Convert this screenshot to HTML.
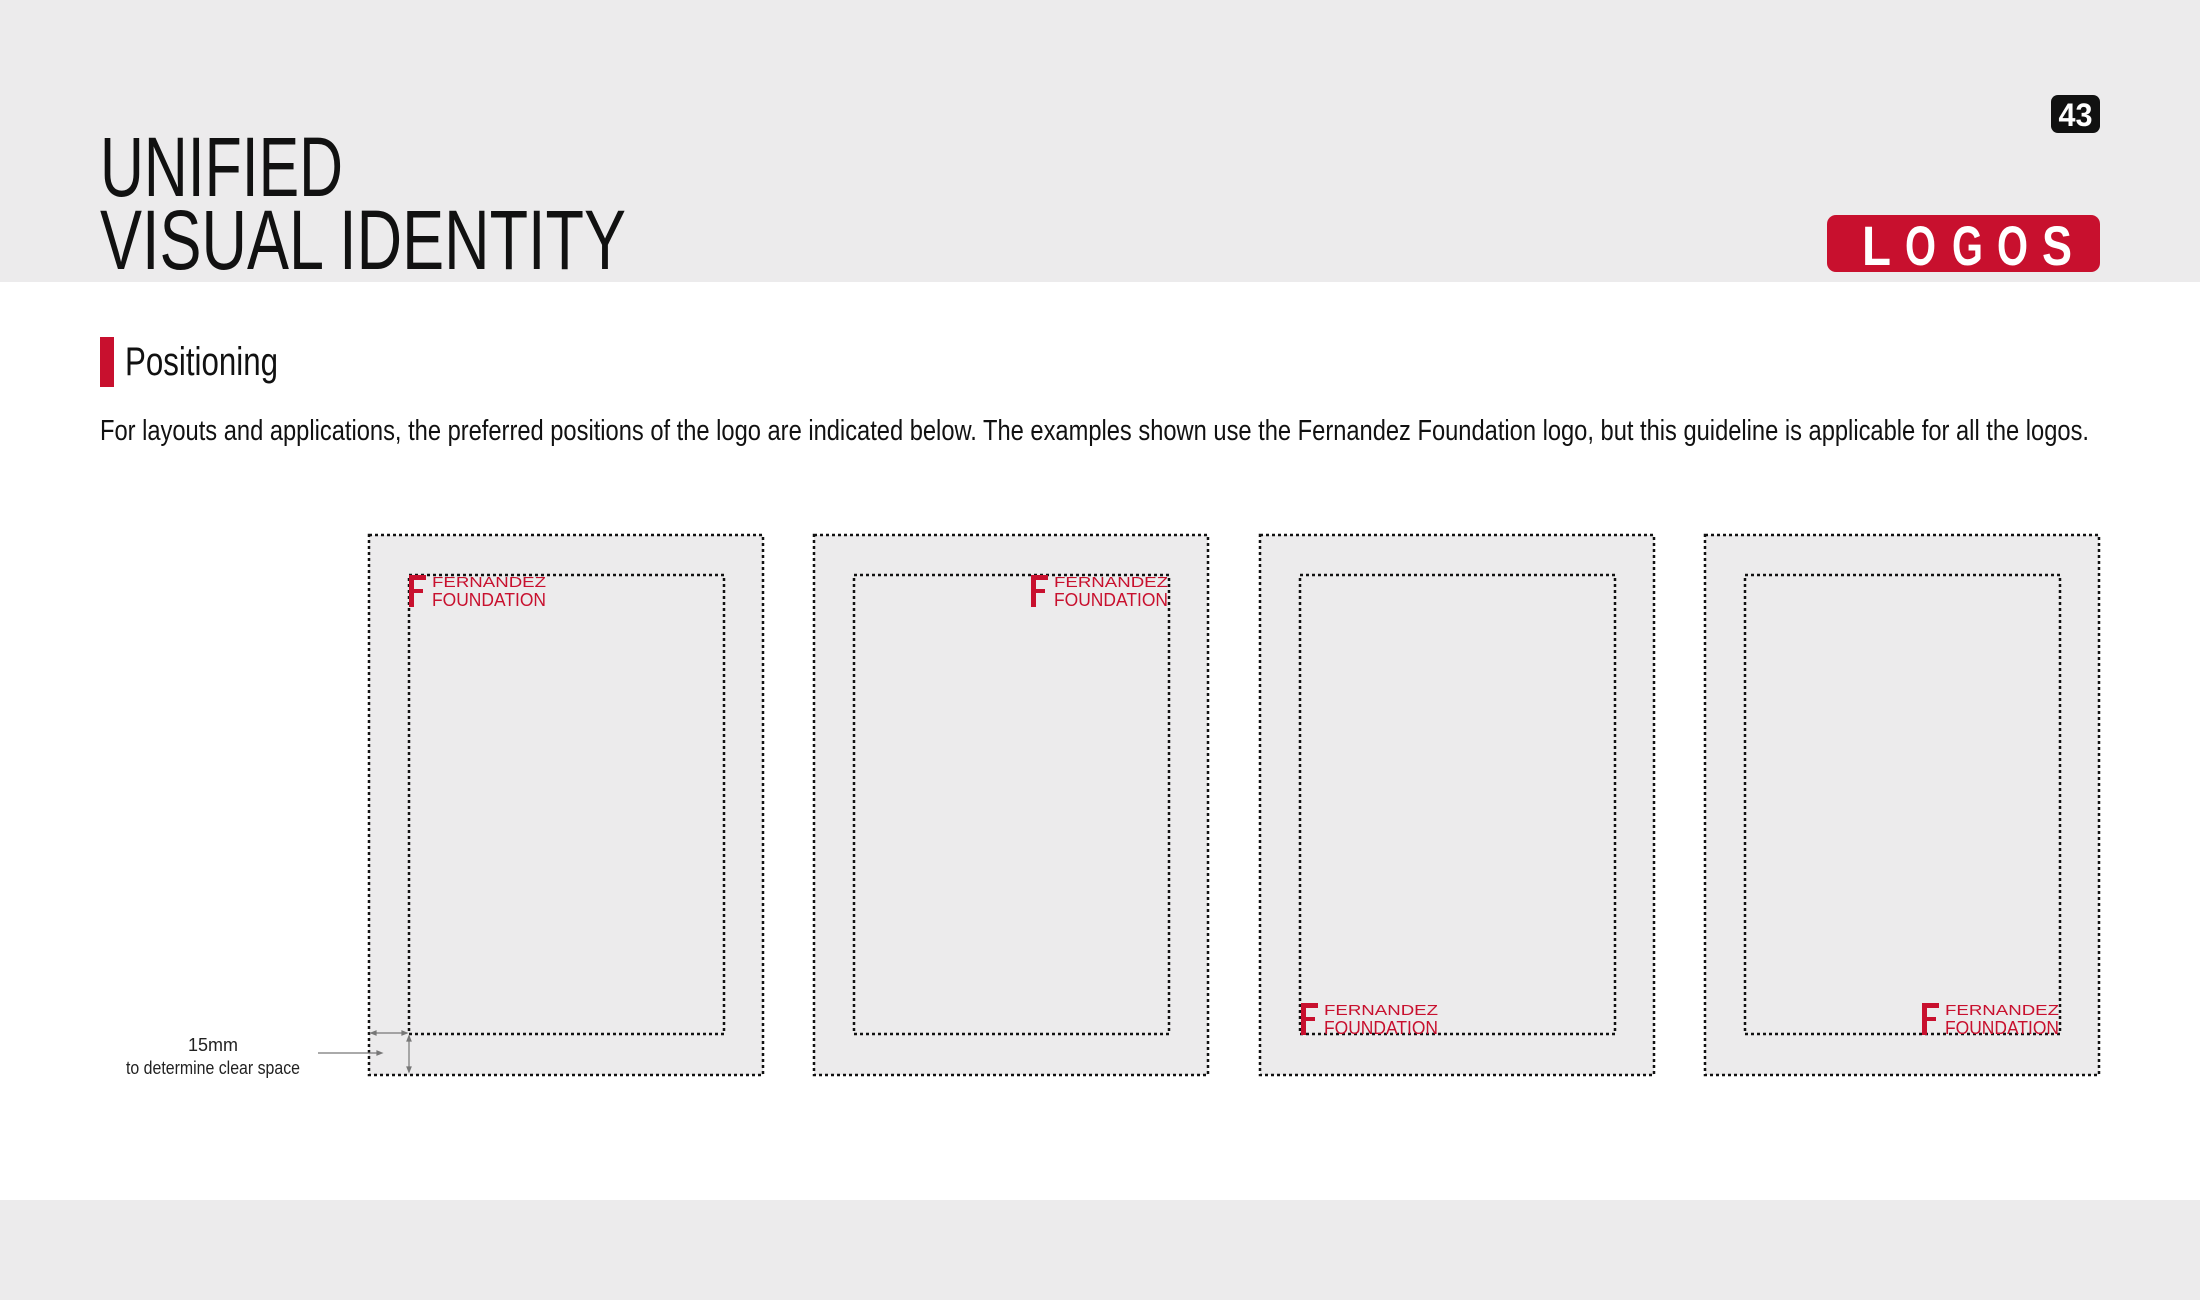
<!DOCTYPE html>
<html><head><meta charset="utf-8"><style>
html,body{margin:0;padding:0;width:2200px;height:1300px;overflow:hidden;background:#fff}
svg{display:block}
text{font-family:"Liberation Sans Narrow","Liberation Sans",sans-serif}
</style></head><body>
<svg width="2200" height="1300" viewBox="0 0 2200 1300" xmlns="http://www.w3.org/2000/svg">
<rect x="0" y="0" width="2200" height="282" fill="#ecebec"/>
<rect x="0" y="1200" width="2200" height="100" fill="#ecebec"/>
<text x="100" y="196" font-size="84" fill="#111" textLength="243" lengthAdjust="spacingAndGlyphs">UNIFIED</text>
<text x="100" y="269" font-size="84" fill="#111" textLength="526" lengthAdjust="spacingAndGlyphs">VISUAL IDENTITY</text>
<rect x="2051" y="95" width="49" height="38" rx="7" fill="#111"/>
<text x="2075.5" y="126" font-size="32" font-weight="bold" fill="#fff" text-anchor="middle" textLength="34" lengthAdjust="spacingAndGlyphs">43</text>
<rect x="1827" y="215" width="273" height="57" rx="9" fill="#c8102e"/>
<g font-size="56" font-weight="bold" fill="#fff">
<text x="1862" y="265" textLength="29" lengthAdjust="spacingAndGlyphs">L</text>
<text x="1905" y="265" textLength="31" lengthAdjust="spacingAndGlyphs">O</text>
<text x="1952" y="265" textLength="31" lengthAdjust="spacingAndGlyphs">G</text>
<text x="1997" y="265" textLength="31" lengthAdjust="spacingAndGlyphs">O</text>
<text x="2042" y="265" textLength="30" lengthAdjust="spacingAndGlyphs">S</text>
</g>
<rect x="100" y="337" width="14" height="50" fill="#c8102e"/>
<text x="125" y="375" font-size="40" fill="#111" textLength="153" lengthAdjust="spacingAndGlyphs">Positioning</text>
<text x="100" y="440" font-size="29" fill="#111" textLength="1989" lengthAdjust="spacingAndGlyphs">For layouts and applications, the preferred positions of the logo are indicated below. The examples shown use the Fernandez Foundation logo, but this guideline is applicable for all the logos.</text>
<g fill="#ecebec" stroke="#111" stroke-width="2.5" stroke-dasharray="3 3">
<rect x="369" y="535" width="394" height="540"/>
<rect x="814" y="535" width="394" height="540"/>
<rect x="1260" y="535" width="394" height="540"/>
<rect x="1705" y="535" width="394" height="540"/>
</g>
<g fill="none" stroke="#111" stroke-width="2.5" stroke-dasharray="3 3">
<rect x="409" y="575" width="315" height="459"/>
<rect x="854" y="575" width="315" height="459"/>
<rect x="1300" y="575" width="315" height="459"/>
<rect x="1745" y="575" width="315" height="459"/>
</g>
<g fill="#c8102e">
<g transform="translate(408,575)"><path d="M1 0h17v5h-12v9h9v4h-9v14h-5z"/><text x="24" y="12" font-family="Liberation Sans,sans-serif" font-size="15" textLength="114" lengthAdjust="spacingAndGlyphs">FERNANDEZ</text><text x="24" y="31" font-family="Liberation Sans,sans-serif" font-size="18" textLength="114" lengthAdjust="spacingAndGlyphs">FOUNDATION</text></g>
<g transform="translate(1030,575)"><path d="M1 0h17v5h-12v9h9v4h-9v14h-5z"/><text x="24" y="12" font-family="Liberation Sans,sans-serif" font-size="15" textLength="114" lengthAdjust="spacingAndGlyphs">FERNANDEZ</text><text x="24" y="31" font-family="Liberation Sans,sans-serif" font-size="18" textLength="114" lengthAdjust="spacingAndGlyphs">FOUNDATION</text></g>
<g transform="translate(1300,1003)"><path d="M1 0h17v5h-12v9h9v4h-9v14h-5z"/><text x="24" y="12" font-family="Liberation Sans,sans-serif" font-size="15" textLength="114" lengthAdjust="spacingAndGlyphs">FERNANDEZ</text><text x="24" y="31" font-family="Liberation Sans,sans-serif" font-size="18" textLength="114" lengthAdjust="spacingAndGlyphs">FOUNDATION</text></g>
<g transform="translate(1921,1003)"><path d="M1 0h17v5h-12v9h9v4h-9v14h-5z"/><text x="24" y="12" font-family="Liberation Sans,sans-serif" font-size="15" textLength="114" lengthAdjust="spacingAndGlyphs">FERNANDEZ</text><text x="24" y="31" font-family="Liberation Sans,sans-serif" font-size="18" textLength="114" lengthAdjust="spacingAndGlyphs">FOUNDATION</text></g>
</g>
<text x="213" y="1051" font-size="18" fill="#222" text-anchor="middle">15mm</text>
<text x="213" y="1074" font-size="18" fill="#222" text-anchor="middle" textLength="174" lengthAdjust="spacingAndGlyphs">to determine clear space</text>
<g stroke="#777" stroke-width="1.2" fill="#777">
<line x1="318" y1="1053" x2="380" y2="1053"/><path d="M382 1053l-5 -2v4z"/>
<line x1="371" y1="1033" x2="407" y2="1033"/><path d="M371 1033l5 -2v4z"/><path d="M407 1033l-5 -2v4z"/>
<line x1="409" y1="1036" x2="409" y2="1072"/><path d="M409 1036l-2 5h4z"/><path d="M409 1072l-2 -5h4z"/>
</g>
</svg>
</body></html>
